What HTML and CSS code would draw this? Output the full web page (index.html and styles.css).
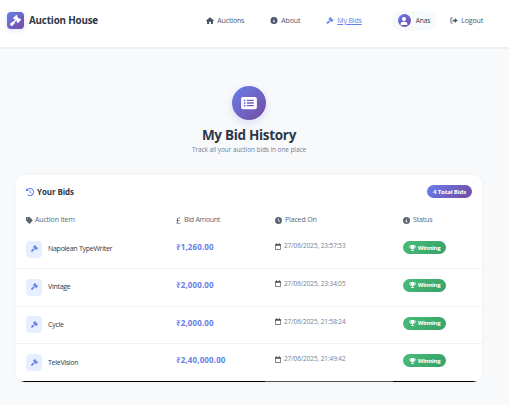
FILE: index.html
```html
<!DOCTYPE html>
<html lang="en">
<head>
<meta charset="utf-8">
<title>My Bid History</title>
<link rel="stylesheet" href="styles.css">
</head>
<body>
<svg class="sprite" aria-hidden="true">
  <symbol id="gavel" viewBox="0 0 512 512"><path d="M318.600 9.400c-12.500-12.500-32.800-12.500-45.300 0l-120 120c-12.500 12.500-12.500 32.800 0 45.300l16 16c12.500 12.500 32.800 12.500 45.300 0l4-4L325.400 293.400l-4 4c-12.500 12.500-12.500 32.800 0 45.300l16 16c12.500 12.500 32.800 12.500 45.300 0l120-120c12.500-12.500 12.500-32.800 0-45.300l-16-16c-12.500-12.500-32.800-12.500-45.300 0l-4 4L330.600 74.600l4-4c12.500-12.500 12.500-32.800 0-45.300zM166.600 297.400c-12.500-12.500-32.800-12.500-45.300 0l-112 112c-12.500 12.500-12.500 32.800 0 45.300l48 48c12.500 12.500 32.800 12.500 45.300 0l112-112c12.500-12.500 12.500-32.800 0-45.300l-1.400-1.400L297 260 252 215 168 298.700z"/></symbol>
  <symbol id="home" viewBox="0 0 576 512"><path d="M288 10 10 255c-18 17-6 33 14 33h40v176q0 48 48 48h112V352h128v160h112q48 0 48-48V288h40c20 0 32-16 14-33z"/></symbol>
  <symbol id="info" viewBox="0 0 512 512"><path fill-rule="evenodd" d="M256 0a256 256 0 1 0 0 512 256 256 0 0 0 0-512zm0 112a36 36 0 1 1 0 72 36 36 0 0 1 0-72zm-56 112h84v112h36v56H192v-56h36v-60h-28z"/></symbol>
  <symbol id="user" viewBox="0 0 448 512"><path d="M224 256a128 128 0 1 0 0-256 128 128 0 0 0 0 256zm-46 48C80 304 0 384 0 482c0 16 14 30 30 30h388c16 0 30-14 30-30 0-98-80-178-178-178z"/></symbol>
  <symbol id="logout" viewBox="0 0 512 512"><path d="M160 32H96Q0 32 0 128v256q0 96 96 96h64v-64H96q-32 0-32-32V128q0-32 32-32h64zM320 96v96H192q-32 0-32 32v64q0 32 32 32h128v96l22-4 160-142q18-14 0-28L342 100z"/></symbol>
  <symbol id="list" viewBox="0 0 576 512"><path fill-rule="evenodd" d="M64 32Q0 32 0 96v320q0 64 64 64h448q64 0 64-64V96q0-64-64-64zm64 96a32 32 0 1 1 0 64 32 32 0 0 1 0-64zm0 96a32 32 0 1 1 0 64 32 32 0 0 1 0-64zm0 96a32 32 0 1 1 0 64 32 32 0 0 1 0-64zm80-184h256v48H208zm0 96h256v48H208zm0 96h256v48H208z"/></symbol>
  <symbol id="history" viewBox="0 0 512 512"><path d="M75 75 41 41C26 26 0 37 0 58v110c0 13 11 24 24 24h110c21 0 32-26 17-41l-30-31a192 192 0 1 1 25 293c-36-24-73 28-37 53A256 256 0 1 0 75 75zm181 53c-13 0-24 11-24 24v104q0 10 7 17l72 72c22 22 56-12 34-34l-65-65v-94c0-13-11-24-24-24z"/></symbol>
  <symbol id="tag" viewBox="0 0 512 512"><path fill-rule="evenodd" d="M0 80v150q0 28 19 47l190 190q45 40 90 0l168-168q40-45 0-90L277 19q-20-19-47-19H48Q0 0 0 48zm112 0a32 32 0 1 1 0 64 32 32 0 0 1 0-64z"/></symbol>
  <symbol id="pound" viewBox="0 0 320 512"><path d="M112 160c0-58 58-80 103-63l57 20 21-60-57-20C143 4 48 61 48 160v64H10v56h38v72c0 32-12 63-37 86-26 20-8 42 11 42h276v-64H99q13-30 13-64v-72h128v-56H112z"/></symbol>
  <symbol id="clock" viewBox="0 0 512 512"><path fill-rule="evenodd" d="M256 0a256 256 0 1 0 0 512 256 256 0 0 0 0-512zm-24 110h50v134l92 62-28 40-114-77z"/></symbol>
  <symbol id="calendar" viewBox="0 0 448 512"><path fill-rule="evenodd" d="M96 0h52v64h152V0h52v64h32q64 0 64 64v320q0 64-64 64H64q-64 0-64-64V128q0-64 64-64h32zM50 192v256q0 14 14 14h320q14 0 14-14V192z"/></symbol>
  <symbol id="trophy" viewBox="0 0 576 512"><path fill-rule="evenodd" d="M144 0h288q20 20 16 64h104q24 0 24 24c-5 142-88 220-200 238-25 23-56 29-56 58v64h64q48 0 48 64H144q0-64 48-64h64v-64c0-29-31-35-56-58C88 308 5 230 0 88q0-24 24-24h104q-4-44 16-64zM50 112c10 70 50 122 115 148-19-42-31-91-34-148zm395 0c-3 57-15 106-34 148 65-26 105-78 115-148z"/></symbol>
</svg>

<header class="topbar">
  <div class="brand"><span class="brand-icon"><svg><use href="#gavel"/></svg></span><span class="brand-name">Auction House</span></div>
  <nav class="nav">
    <a class="nav-item auctions"><svg><use href="#home"/></svg><span>Auctions</span></a>
    <a class="nav-item about"><svg><use href="#info"/></svg><span>About</span></a>
    <a class="nav-item current"><svg><use href="#gavel"/></svg><span>My Bids</span></a>
    <span class="profile"><span class="avatar"><svg><use href="#user"/></svg></span><span>Anas</span></span>
    <a class="nav-item"><svg><use href="#logout"/></svg><span>Logout</span></a>
  </nav>
</header>

<main>
  <section class="hero">
    <span class="hero-icon"><svg><use href="#list"/></svg></span>
    <h1>My Bid History</h1>
    <p>Track all your auction bids in one place</p>
  </section>
  <section class="card">
    <div class="card-head"><h2><svg><use href="#history"/></svg><span>Your Bids</span></h2><span class="total">4 Total Bids</span></div>
    <div class="row labels">
      <span><svg><use href="#tag"/></svg>Auction Item</span>
      <span class="amount-label"><svg><use href="#pound"/></svg>Bid Amount</span>
      <span><svg><use href="#clock"/></svg>Placed On</span>
      <span><svg><use href="#info"/></svg>Status</span>
    </div>
    <div class="row bid">
      <div class="item"><span class="tile"><svg><use href="#gavel"/></svg></span><span>Napolean TypeWriter</span></div>
      <div class="amount">₹1,260.00</div>
      <div class="date"><svg><use href="#calendar"/></svg>27/06/2025, 23:57:53</div>
      <div><span class="status"><svg><use href="#trophy"/></svg>Winning</span></div>
    </div>
    <div class="row bid">
      <div class="item"><span class="tile"><svg><use href="#gavel"/></svg></span><span>Vintage</span></div>
      <div class="amount">₹2,000.00</div>
      <div class="date"><svg><use href="#calendar"/></svg>27/06/2025, 23:34:05</div>
      <div><span class="status"><svg><use href="#trophy"/></svg>Winning</span></div>
    </div>
    <div class="row bid">
      <div class="item"><span class="tile"><svg><use href="#gavel"/></svg></span><span>Cycle</span></div>
      <div class="amount">₹2,000.00</div>
      <div class="date"><svg><use href="#calendar"/></svg>27/06/2025, 21:58:24</div>
      <div><span class="status"><svg><use href="#trophy"/></svg>Winning</span></div>
    </div>
    <div class="row bid">
      <div class="item"><span class="tile"><svg><use href="#gavel"/></svg></span><span>TeleVision</span></div>
      <div class="amount">₹2,40,000.00</div>
      <div class="date"><svg><use href="#calendar"/></svg>27/06/2025, 21:49:42</div>
      <div><span class="status"><svg><use href="#trophy"/></svg>Winning</span></div>
    </div>
    <div class="baseline"></div>
  </section>
</main>
</body>
</html>
```
FILE: styles.css
```css
* { box-sizing: border-box; }
body { margin: 0; height: 405px; overflow: hidden; background: #f8f9fb; color: #2d3748; font-family: "Open Sans", "Noto Sans", sans-serif; font-size: 7px; line-height: 10px; white-space: nowrap; }
svg { display: block; flex: none; fill: currentColor; width: 8px; height: 8px; }
.sprite { position: absolute; width: 0; height: 0; }
h1, h2, p { margin: 0; }
.topbar { height: 49px; padding: 0 26px 6px 7px; display: flex; align-items: center; justify-content: space-between; background: #fff; border-bottom: 2px solid #eeeff0; }
.brand { display: flex; align-items: center; gap: 5px; }
.brand-icon { width: 17px; height: 17px; border-radius: 4px; display: grid; place-items: center; color: #fff; background: linear-gradient(135deg, #667eea, #764ba2); box-shadow: 0 1px 5px #667eea40; }
.brand-icon svg { width: 11px; height: 11px; }
.brand-name { padding-top: 1px; font-size: 9.8px; font-weight: 700; letter-spacing: -.17px; }
.nav { display: flex; align-items: center; color: #4a5568; }
.nav-item { display: flex; align-items: center; gap: 3px; font-weight: 500; letter-spacing: -.15px; }
.nav-item svg { width: 8px; height: 7px; }
.auctions { margin-right: 26px; }
.about { margin-right: 26px; }
.auctions span { letter-spacing: -.15px; }
.current { color: #667eea; text-decoration: underline; margin-right: 29px; }
.profile { display: flex; align-items: center; gap: 5px; width: 46px; height: 20px; padding-left: 7px; margin-right: 13.5px; border-radius: 10px; background: #f7fafc; color: #2d3748; font-weight: 500; font-size: 6.5px; letter-spacing: -.1px; }
.avatar { width: 13px; height: 13px; border-radius: 50%; display: grid; place-items: center; color: #fff; background: linear-gradient(135deg, #667eea, #764ba2); }
.avatar svg { width: 8px; height: 8px; }
.hero { height: 126px; padding-top: 37px; display: flex; flex-direction: column; align-items: center; margin-right: 11px; }
.hero-icon { width: 34px; height: 34px; border-radius: 50%; display: grid; place-items: center; color: #fff; background: linear-gradient(135deg, #667eea, #764ba2); box-shadow: 0 3px 8px #667eea38; }
.hero-icon svg { width: 16px; height: 14px; }
h1 { margin-top: 6px; font-size: 13.5px; line-height: 18px; letter-spacing: -.3px; }
.hero p { margin-top: 1px; color: #718096; font-size: 6.5px; letter-spacing: -.08px; }
.card { width: 466px; height: 207px; margin-left: 16px; overflow: hidden; display: flex; flex-direction: column; background: #fff; border-radius: 9px; box-shadow: 0 1px 6px #00000008; }
.card-head { height: 33px; padding: 0 10px; display: flex; align-items: center; justify-content: space-between; }
h2 { display: flex; align-items: center; gap: 3px; padding-top: 1px; font-size: 8px; letter-spacing: -.1px; }
h2 svg { color: #667eea; }
.total { width: 45px; height: 13px; border-radius: 7px; color: #fff; font-weight: 700; font-size: 6px; line-height: 14px; letter-spacing: -.1px; text-align: center; background: linear-gradient(135deg, #667eea, #764ba2); }
.row { display: grid; grid-template-columns: 150px 99px 128px 1fr; padding-left: 10px; }
.labels { height: 23px; align-items: center; color: #5c6675; font-weight: 500; letter-spacing: -.15px; }
.labels > span { display: flex; align-items: center; gap: 2px; padding-top: 1px; }
.labels > span:nth-child(n+3) { gap: 3px; }
.labels svg { width: 7px; height: 7px; }
.labels .amount-label { gap: 2px; letter-spacing: -.25px; }
.amount-label svg { width: 5px; margin-right: 1px; }
.bid { flex: 1; border-bottom: 1px solid #edf2f7; }
.bid:nth-last-child(2) { border-bottom: 0; }
.item { display: flex; align-items: center; gap: 6px; font-weight: 500; letter-spacing: -.27px; }
.tile { width: 16px; height: 17px; border-radius: 4px; display: grid; place-items: center; color: #667eea; background: #e6efff; }
.tile svg { width: 7px; height: 7px; margin-bottom: 1px; }
.amount { padding-top: 11px; font-size: 8px; font-weight: 700; letter-spacing: .13px; color: #667eea; }
.date { display: flex; gap: 3px; padding-top: 10px; height: 20px; align-items: center; font-size: 6.5px; letter-spacing: -.1px; color: #718096; }
.date svg { width: 6px; height: 7px; color: #555; }
.status { display: flex; align-items: center; justify-content: center; gap: 2px; width: 43px; height: 13px; margin-top: 10px; border-radius: 7px; font-size: 6px; font-weight: 700; letter-spacing: -.3px; color: #fff; background: linear-gradient(135deg, #48bb78, #38a169); }
.status svg { width: 7px; height: 6px; }
.baseline { height: 1px; background: linear-gradient(90deg, #000 249px, #555 249px 377px, #000 377px); }
```
